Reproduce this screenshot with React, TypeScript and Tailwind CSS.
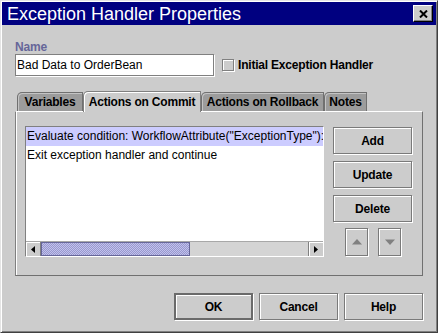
import React from "react";

const font = { fontFamily: '"Liberation Sans", Arial, sans-serif' };

function Btn({ children, className = "", def = false }: { children?: React.ReactNode; className?: string; def?: boolean }) {
  return (
    <div
      className={
        "flex items-center justify-center h-[27px] bg-[#cccccc] text-[12px] leading-[14px] font-bold tracking-[-0.2px] text-black " +
        (def
          ? "border-2 border-[#6a6a6a] shadow-[inset_1px_1px_0_#ffffff,1px_1px_0_#ffffff] "
          : "border border-[#7a7a7a] shadow-[inset_1px_1px_0_#ffffff,1px_1px_0_#ffffff] ") +
        className
      }
    >
      {children}
    </div>
  );
}

function Tab({ label, w, selected = false }: { label: string; w: string; selected?: boolean }) {
  return (
    <div
      className={
        "relative flex items-center justify-center rounded-tl-[5px] text-[12px] leading-[14px] font-bold tracking-[-0.2px] text-black border-t border-l border-r " +
        w +
        (selected
          ? " z-10 h-[21px] -mb-[1px] bg-[#cccccc] border-[#808080] shadow-[inset_1px_1px_0_#ffffff]"
          : " h-[19px] bg-[#9c9c9c] border-[#707070] shadow-[inset_1px_1px_0_#c4c4c4]")
      }
    >
      {label}
    </div>
  );
}

export default function App() {
  return (
    <div style={font} className="w-[438px] h-[333px] bg-[#cccccc] border border-t-[#e4e4e4] border-l-[#e4e4e4] border-r-[#404040] border-b-[#404040] shadow-[inset_1px_1px_0_#ffffff,inset_-1px_-1px_0_#808080] p-[1px] flex flex-col overflow-hidden">
      {/* Title bar */}
      <div className="h-[23px] bg-[#000080] flex items-center justify-between pl-[5px] pr-[3px] shrink-0">
        <span className="text-white text-[18px] leading-[20px]">Exception Handler Properties</span>
        <div className="w-[20px] h-[17px] bg-[#cccccc] border border-t-[#ffffff] border-l-[#ffffff] border-r-[#000000] border-b-[#000000] shadow-[inset_-1px_-1px_0_#808080] flex items-center justify-center">
          <svg width="9" height="8" viewBox="0 0 9 8">
            <path d="M1 0.5 L8 7.5 M8 0.5 L1 7.5" stroke="#000" strokeWidth="2" />
          </svg>
        </div>
      </div>

      {/* Content */}
      <div className="px-[13px] flex flex-col">
        <div className="mt-[15px] h-[14px] text-[12px] leading-[14px] font-bold tracking-[-0.2px] text-[#666699]">Name</div>
        <div className="flex items-center h-[22px]">
          <div className="w-[199px] h-[22px] bg-white border border-[#808080] shadow-[1px_1px_0_#ffffff] flex items-center pl-[1px] text-[12px] leading-[14px] text-black whitespace-nowrap">
            Bad Data to OrderBean
          </div>
          <div className="ml-[8px] w-[12px] h-[12px] bg-[#cccccc] border border-[#808080] shadow-[inset_1px_1px_0_#ffffff,1px_1px_0_#ffffff]" />
          <span className="ml-[4px] text-[12px] leading-[14px] font-bold tracking-[-0.2px] text-black whitespace-nowrap">Initial Exception Handler</span>
        </div>

        {/* Tabs */}
        <div className="mt-[16px] flex items-end pl-[2px] h-[19px]">
          <Tab label="Variables" w="w-[66px]" />
          <Tab label="Actions on Commit" w="w-[118px]" selected />
          <Tab label="Actions on Rollback" w="w-[123px]" />
          <Tab label="Notes" w="w-[43px]" />
        </div>

        {/* Panel */}
        <div className="h-[165px] border border-t-[#ffffff] border-l-[#808080] border-r-[#707070] border-b-[#707070] shadow-[inset_1px_0_0_#ffffff] flex pl-[9px] pt-[14px]">
          {/* List */}
          <div className="w-[299px] h-[131px] bg-white border border-t-[#808080] border-l-[#808080] border-r-[#ffffff] border-b-[#ffffff] flex flex-col overflow-hidden">
            <div className="flex-1 overflow-hidden">
              <div className="h-[19px] bg-[#ccccff] pl-[1px] text-[12px] leading-[19px] text-black whitespace-nowrap overflow-hidden">
                Evaluate condition: WorkflowAttribute("ExceptionType"):
              </div>
              <div className="h-[18px] pl-[1px] text-[12px] leading-[18px] text-black whitespace-nowrap">
                Exit exception handler and continue
              </div>
            </div>
            {/* Scrollbar */}
            <div className="h-[15px] flex bg-[#d4d4d4] border-t border-[#a8a8a8]">
              <div className="w-[15px] h-full bg-[#cccccc] border-r border-[#808080] shadow-[inset_1px_1px_0_#ffffff] flex items-center justify-center">
                <svg width="4" height="7" viewBox="0 0 4 7">
                  <path d="M4 0 L0 3.5 L4 7 Z" fill="#000" />
                </svg>
              </div>
              <div className="w-[149px] h-full bg-[#9999cc] border border-[#666699] bg-[conic-gradient(#c0c0ee_25%,transparent_0_50%,#c0c0ee_0_75%,transparent_0)] bg-size-[2px_2px]" />
              <div className="flex-1" />
              <div className="w-[15px] h-full bg-[#cccccc] border-l border-[#808080] shadow-[inset_1px_1px_0_#ffffff] flex items-center justify-center">
                <svg width="4" height="7" viewBox="0 0 4 7">
                  <path d="M0 0 L4 3.5 L0 7 Z" fill="#000" />
                </svg>
              </div>
            </div>
          </div>

          {/* Right buttons */}
          <div className="ml-[9px] w-[79px] pt-[1px] flex flex-col gap-[7px]">
            <Btn className="w-[79px]">Add</Btn>
            <Btn className="w-[79px]">Update</Btn>
            <Btn className="w-[79px]">Delete</Btn>
            <div className="flex justify-center gap-[10px] -mt-[1px] pl-[1px]">
              <div className="w-[23px] h-[28px] bg-[#cccccc] border border-[#7a7a7a] shadow-[inset_1px_1px_0_#ffffff,1px_1px_0_#ffffff] flex items-center justify-center">
                <svg width="10" height="6" viewBox="0 0 10 6">
                  <path d="M5 0 L10 5.5 L0 5.5 Z" fill="#808080" />
                </svg>
              </div>
              <div className="w-[23px] h-[28px] bg-[#cccccc] border border-[#7a7a7a] shadow-[inset_1px_1px_0_#ffffff,1px_1px_0_#ffffff] flex items-center justify-center">
                <svg width="10" height="6" viewBox="0 0 10 6">
                  <path d="M0 0.5 L10 0.5 L5 6 Z" fill="#808080" />
                </svg>
              </div>
            </div>
          </div>
        </div>

        {/* Bottom buttons */}
        <div className="mt-[17px] flex justify-end gap-[6px]">
          <Btn className="w-[79px]" def>OK</Btn>
          <Btn className="w-[79px]">Cancel</Btn>
          <Btn className="w-[79px]">Help</Btn>
        </div>
      </div>
    </div>
  );
}
